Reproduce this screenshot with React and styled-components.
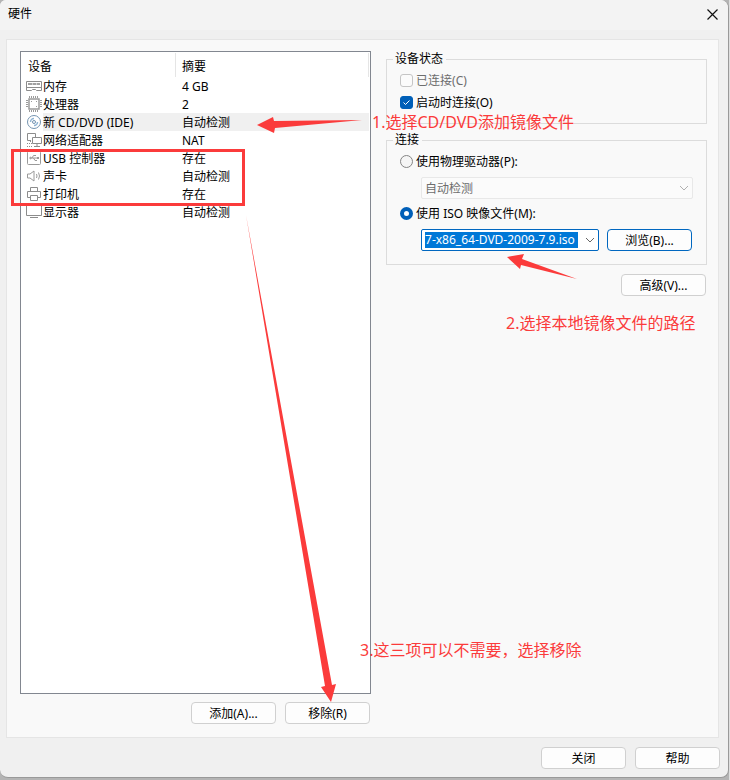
import React, { useState } from 'react';
import styled, { createGlobalStyle } from 'styled-components';

const GlobalStyle = createGlobalStyle`
  * {
    box-sizing: border-box;
  }

  body {
    margin: 0;
    background-color: #b4b4b4;
    font-family: 'Noto Sans', 'Noto Sans CJK SC', sans-serif;
    font-size: 12px;
    line-height: 18px;
    color: #000;
  }
`;

const Desktop = styled.div`
  display: flex;
  min-height: 100vh;
  padding-bottom: 2px;
  border-right: 1px solid #dedede;
`;

const Dialog = styled.main`
  position: relative;
  flex: 1;
  display: flex;
  flex-direction: column;
  background-color: #f0f0f0;
  border-right: 1px solid #999;
  border-bottom: 1px solid #999;
  border-radius: 6px 8px 8px 8px;
`;

const TitleBar = styled.header`
  display: flex;
  align-items: center;
  justify-content: space-between;
  height: 30px;
  padding: 0 8px 2px;
  background-color: #f3f3f3;
  border-radius: 6px 8px 0 0;
`;

const Title = styled.h1`
  margin: 0;
  font-size: 12px;
  font-weight: 400;
`;

const CloseButton = styled.button`
  display: flex;
  padding: 2px;
  border: none;
  background: none;
`;

const Panel = styled.div`
  flex: 1;
  display: grid;
  grid-template-columns: 35fr 32fr;
  gap: 15px;
  margin: 9px 9px 0 6px;
  padding: 11px 11px 13px 13px;
  background-color: #f9f9f9;
  border: 1px solid #e5e5e5;
`;

const Column = styled.div`
  display: flex;
  flex-direction: column;
  min-width: 0;
`;

const ListView = styled.div`
  flex: 1;
  padding: 1px 1px 0 0;
  background-color: #fff;
  border: 1px solid #828790;
`;

const DeviceTable = styled.table`
  width: 100%;
  border-collapse: separate;
  border-spacing: 0;
  table-layout: fixed;
`;

const HeadCell = styled.th`
  width: ${(props) => props.$width || 'auto'};
  height: 24px;
  padding: 4px 6px 0 ${(props) => props.$indent || '6px'};
  border-right: 1px solid #e5e5e5;
  font-weight: 400;
  text-align: left;
`;

const NameCell = styled.td`
  height: 18px;
  padding: 0 0 0 5px;
`;

const NameContent = styled.div`
  display: flex;
  align-items: center;
  gap: 1px;
`;

const Name = styled.span`
  flex: 1;
  padding-top: 2px;
  background-color: ${(props) => (props.$selected ? '#f0f0f0' : 'transparent')};
  line-height: 16px;
  white-space: nowrap;
`;

const SummaryCell = styled.td`
  height: 18px;
  padding: 2px 6px 0;
  background-color: ${(props) => (props.$selected ? '#f0f0f0' : 'transparent')};
  line-height: 16px;
`;

const ButtonRow = styled.div`
  display: flex;
  justify-content: flex-end;
  gap: 9px;
  padding: ${(props) => props.$padding || '0'};
`;

const Button = styled.button`
  width: 85px;
  height: 22px;
  padding: 2px 0 0;
  background-color: #fdfdfd;
  border: 1px solid ${(props) => (props.$primary ? '#0067c0' : '#d0d0d0')};
  border-radius: 4px;
  color: #000;
  font: inherit;
  line-height: 18px;
`;

const Group = styled.fieldset`
  min-width: 0;
  margin: 0 0 ${(props) => props.$gap || '8px'};
  padding: 2px 6px 0;
  border: 1px solid #dcdcdc;
`;

const GroupBody = styled.div`
  padding: 0 7px ${(props) => props.$bottom};
`;

const Legend = styled.legend`
  padding: 0 3px 0 2px;
  line-height: 16px;
`;

const Choice = styled.label`
  display: flex;
  align-items: center;
  gap: 3px;
  height: 22px;
  line-height: 16px;
  color: ${(props) => (props.$disabled ? '#6d6d6d' : '#000')};
`;

const ChoiceText = styled.span`
  padding-top: 1px;
`;

const CheckBox = styled.input`
  appearance: none;
  width: 13px;
  height: 13px;
  margin: 0;
  border: 1px solid #c5c5c5;
  border-radius: 3px;
  background: #fbfbfb;

  &:checked {
    border-color: #005fb8;
    background: #005fb8
      url("data:image/svg+xml,%3Csvg xmlns='http://www.w3.org/2000/svg' viewBox='0 0 11 11'%3E%3Cpath d='M2.5 5.5l2 2 4-4' fill='none' stroke='white'/%3E%3C/svg%3E")
      center;
  }
`;

const Radio = styled.input`
  appearance: none;
  width: 13px;
  height: 13px;
  margin: 0;
  border: 1px solid #858585;
  border-radius: 50%;
  background: #f5f5f5;

  &:checked {
    border: 4px solid #005fb8;
    background: #fff;
  }
`;

const SelectBox = styled.div`
  display: grid;
  align-items: center;
  margin: 5px 0 3px 21px;

  > * {
    grid-area: 1 / 1;
  }

  > svg {
    justify-self: end;
    margin-right: 4px;
    pointer-events: none;
  }
`;

const Select = styled.select`
  appearance: none;
  width: 100%;
  height: 22px;
  padding: 2px 3px 0;
  border: 1px solid #e8e8e8;
  border-radius: 2px;
  background-color: #fbfbfb;
  color: #6d6d6d;
  font: inherit;
  opacity: 1;
`;

const IsoRow = styled.div`
  display: flex;
  align-items: center;
  gap: 8px;
  margin: 5px 1px 0 21px;
`;

const Combo = styled.div`
  flex: 1;
  display: flex;
  align-items: center;
  min-width: 0;
  height: 22px;
  padding: 0 3px;
  background-color: #fff;
  border: 1px solid #0067c0;
  border-radius: 2px;
`;

const ComboInput = styled.input`
  flex: 1;
  min-width: 0;
  height: 16px;
  padding: 0;
  border: none;
  background-color: #0078d7;
  color: #fff;
  font: inherit;
`;

const ComboButton = styled.button`
  display: flex;
  justify-content: flex-end;
  width: 17px;
  padding: 0;
  border: none;
  background: none;
`;

const Overlay = styled.svg`
  position: absolute;
  top: 0;
  left: 0;
  width: 728px;
  height: 778px;
  pointer-events: none;
`;

const Note = styled.p`
  position: absolute;
  top: ${(props) => props.$top}px;
  left: ${(props) => props.$left}px;
  margin: 0;
  color: #fb3b3b;
  font-size: 16px;
  line-height: 18px;
  white-space: nowrap;
  pointer-events: none;
`;

const Icon = ({ children, color = '#9a9a9a' }) => (
  <svg width="16" height="16" viewBox="0 0 16 16" fill="none" stroke={color} aria-hidden="true">
    {children}
  </svg>
);

const Chevron = ({ color }) => (
  <svg width="10" height="6" viewBox="0 0 10 6" fill="none" stroke={color} aria-hidden="true">
    <path d="M1 1l4 4 4-4" />
  </svg>
);

const icons = {
  memory: (
    <Icon color="#8c8c8c">
      <path d="M.5 3.5h15v9h-5l-1-1h-3l-1 1h-5z" />
      <path d="M2 6h4M6.5 6H10M10.500 6H14" strokeWidth="2" stroke="#a0a0a0" />
      <path d="M1 9.500h14" />
    </Icon>
  ),
  cpu: (
    <Icon>
      <rect x="3" y="3" width="10" height="10" strokeWidth="1.5" />
      <path
        d="M3.5 0v2M5.5 0v2M7.5 0v2M9.5 0v2M11.5 0v2M3.5 14v2M5.5 14v2M7.5 14v2M9.5 14v2M11.5 14v2M0 4.500h2M0 6.500h2M0 8.500h2M0 10.500h2M14 4.500h2M14 6.500h2M14 8.500h2M14 10.500h2"
        stroke="#9a9a9a"
      />
      <path d="M5 5.500h1M10 10.500h1M10 5.500h1" />
    </Icon>
  ),
  disc: (
    <Icon color="#7594b0">
      <circle cx="8" cy="8" r="6.5" />
      <circle cx="8" cy="8" r="1.5" />
      <path d="M4.500 8A3.500 3.500 0 0 1 8 4.500M11.500 8A3.500 3.500 0 0 1 8 11.500" stroke="#8fb4d4" strokeWidth="1.5" />
    </Icon>
  ),
  network: (
    <Icon color="#8c8c8c">
      <path d="M5 8.500H1.500v-7h8V5" />
      <path d="M4.500 9v2M1 11.500h5M1 14.500h6" strokeDasharray="1 1" />
      <path d="M6.500 5.500h9v6h-9zM11 12v2M8 14.500h6" />
    </Icon>
  ),
  usb: (
    <Icon>
      <rect x="1.5" y="1.5" width="13" height="13" rx="1" />
      <path d="M4 8h8M6 8l1.500-2.500H10M7.500 8L9 10.500h2" />
      <circle cx="4.500" cy="8" r=".8" />
      <path d="M11 8h2" strokeWidth="2" />
    </Icon>
  ),
  sound: (
    <Icon>
      <path d="M1.500 6v4h2.500l4 3V3L4 6zM10.500 6q1 2 0 4M12.500 4.500q2 3.500 0 7" />
    </Icon>
  ),
  printer: (
    <Icon color="#8c8c8c">
      <path d="M4.500 5.500v-4h7v4M4 11.500H1.500v-6h13v6H12M4.500 9.500h7v5h-7z" />
    </Icon>
  ),
  display: (
    <Icon color="#8c8c8c">
      <path d="M.5 1.500h15v10H.5zM4 13.500h8" />
    </Icon>
  ),
};

const devices = [
  { icon: 'memory', name: '内存', summary: '4 GB' },
  { icon: 'cpu', name: '处理器', summary: '2' },
  { icon: 'disc', name: '新 CD/DVD (IDE)', summary: '自动检测', selected: true },
  { icon: 'network', name: '网络适配器', summary: 'NAT' },
  { icon: 'usb', name: 'USB 控制器', summary: '存在' },
  { icon: 'sound', name: '声卡', summary: '自动检测' },
  { icon: 'printer', name: '打印机', summary: '存在' },
  { icon: 'display', name: '显示器', summary: '自动检测' },
];

const DeviceList = () => (
  <ListView>
    <DeviceTable>
      <thead>
        <tr>
          <HeadCell $width="155px" $indent="7px">设备</HeadCell>
          <HeadCell>摘要</HeadCell>
        </tr>
      </thead>
      <tbody>
        {devices.map((device) => (
          <tr key={device.name}>
            <NameCell>
              <NameContent>
                {icons[device.icon]}
                <Name $selected={device.selected}>{device.name}</Name>
              </NameContent>
            </NameCell>
            <SummaryCell $selected={device.selected}>{device.summary}</SummaryCell>
          </tr>
        ))}
      </tbody>
    </DeviceTable>
  </ListView>
);

const App = () => {
  const [connectAtStart, setConnectAtStart] = useState(true);
  const [source, setSource] = useState('iso');
  const [isoPath, setIsoPath] = useState('7-x86_64-DVD-2009-7.9.iso');

  return (
    <Desktop>
      <GlobalStyle />
      <Dialog>
        <TitleBar>
          <Title>硬件</Title>
          <CloseButton aria-label="关闭窗口">
            <svg width="11" height="11" viewBox="0 0 11 11" stroke="#111" strokeWidth="1.2">
              <path d="M.5.5l10 10M10.500.5l-10 10" />
            </svg>
          </CloseButton>
        </TitleBar>
        <Panel>
          <Column>
            <DeviceList />
            <ButtonRow $padding="8px 1px 0 0">
              <Button>添加(A)...</Button>
              <Button>移除(R)</Button>
            </ButtonRow>
          </Column>
          <Column>
            <Group>
              <Legend>设备状态</Legend>
              <GroupBody $bottom="10px">
                <Choice $disabled>
                  <CheckBox type="checkbox" disabled />
                  <ChoiceText>已连接(C)</ChoiceText>
                </Choice>
                <Choice>
                  <CheckBox
                    type="checkbox"
                    checked={connectAtStart}
                    onChange={(e) => setConnectAtStart(e.target.checked)}
                  />
                  <ChoiceText>启动时连接(O)</ChoiceText>
                </Choice>
              </GroupBody>
            </Group>
            <Group $gap="9px">
              <Legend>连接</Legend>
              <GroupBody $bottom="13px">
                <Choice>
                  <Radio
                    type="radio"
                    name="source"
                    checked={source === 'drive'}
                    onChange={() => setSource('drive')}
                  />
                  <ChoiceText>使用物理驱动器(P):</ChoiceText>
                </Choice>
                <SelectBox>
                  <Select aria-label="物理驱动器" disabled={source !== 'drive'}>
                    <option>自动检测</option>
                  </Select>
                  <Chevron color="#b0b0b0" />
                </SelectBox>
                <Choice>
                  <Radio
                    type="radio"
                    name="source"
                    checked={source === 'iso'}
                    onChange={() => setSource('iso')}
                  />
                  <ChoiceText>使用 ISO 映像文件(M):</ChoiceText>
                </Choice>
                <IsoRow>
                  <Combo>
                    <ComboInput
                      aria-label="ISO 映像文件"
                      value={isoPath}
                      onChange={(e) => setIsoPath(e.target.value)}
                    />
                    <ComboButton aria-label="显示列表">
                      <Chevron color="#666" />
                    </ComboButton>
                  </Combo>
                  <Button $primary>浏览(B)...</Button>
                </IsoRow>
              </GroupBody>
            </Group>
            <ButtonRow $padding="0 1px 0 0">
              <Button>高级(V)...</Button>
            </ButtonRow>
          </Column>
        </Panel>
        <ButtonRow $padding="9px 8px 8px">
          <Button>关闭</Button>
          <Button>帮助</Button>
        </ButtonRow>
        <Overlay fill="#fb3b3b" aria-hidden="true">
          <path d="M257 125l16-8 1 4 88-1-87 8-1 5z" />
          <path d="M507 257l17-3-2 5 55 20-56-14-1 4z" />
          <path d="M246 215l86 470 4-1-5 18-10-15 4-1z" />
          <rect x="12.5" y="150.5" width="231" height="54" fill="none" stroke="#fb3b3b" strokeWidth="3" />
        </Overlay>
        <Note $top={113} $left={372}>1.选择CD/DVD添加镜像文件</Note>
        <Note $top={314} $left={506}>2.选择本地镜像文件的路径</Note>
        <Note $top={641} $left={360}>3.这三项可以不需要，选择移除</Note>
      </Dialog>
    </Desktop>
  );
};

export default App;
